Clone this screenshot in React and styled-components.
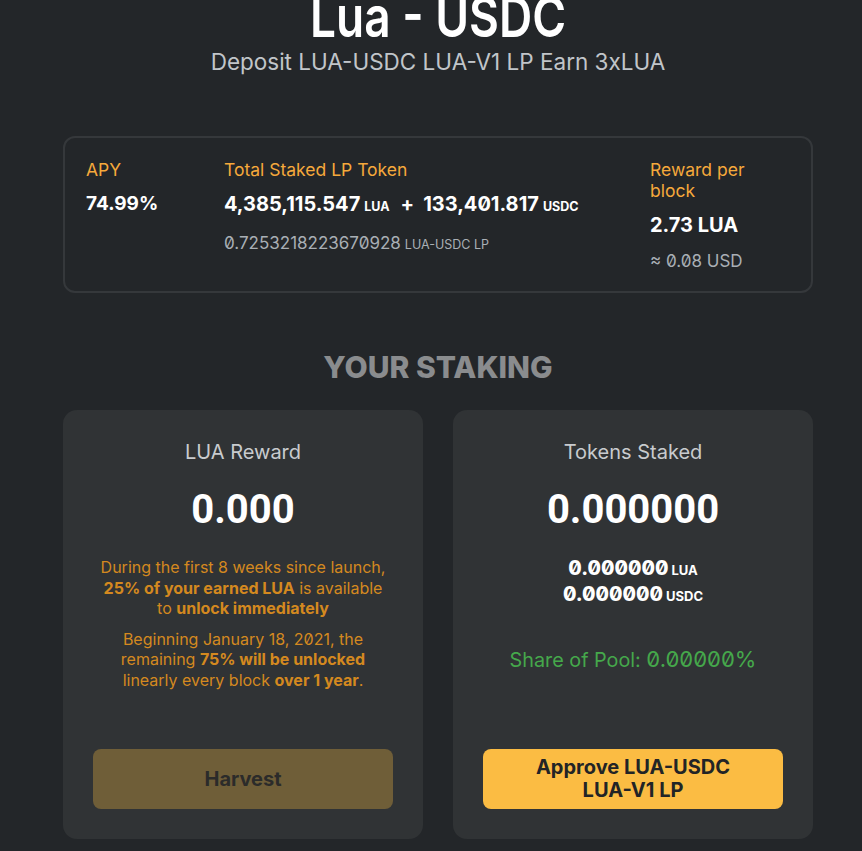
import React from 'react'
import { styled, createGlobalStyle } from 'styled-components'

const Global = createGlobalStyle`
  html, body {
    margin: 0;
    padding: 0;
    background: #232629;
  }
  body {
    font-family: Inter, "Noto Sans", sans-serif;
    font-feature-settings: "zero" 1;
    color: #fff;
  }
`

const Page = styled.div`
  width: 750px;
  margin-left: 63px;
  padding-bottom: 40px;
`

const Header = styled.div`
  display: flex;
  flex-direction: column;
  align-items: center;
`

const Title = styled.h1`
  margin: -3px 0 0;
  font-size: 46px;
  line-height: 46px;
  font-weight: 600;
  color: #fff;
  transform: scaleY(1.22);
  transform-origin: 50% 86%;
`

const Subtitle = styled.div`
  margin-top: 5px;
  font-size: 22.5px;
  line-height: 28px;
  color: #c1c5c9;
`

const Stats = styled.div`
  margin-top: 60px;
  border: 2px solid #35383b;
  border-radius: 12px;
  padding: 21px 40px 19px 21px;
  display: grid;
  grid-template-columns: 138px 1fr 121px;
`

const StatCol = styled.div`
  display: flex;
  flex-direction: column;
`

const Label = styled.div`
  font-size: 17.5px;
  line-height: 21px;
  color: #f6a93b;
`

const Value = styled.div`
  margin-top: 12px;
  font-size: ${p => p.$size || 20}px;
  line-height: 24px;
  font-weight: 700;
  color: #fff;
  white-space: nowrap;
`

const Unit = styled.span`
  font-size: 12.5px;
  font-weight: 700;
  margin-left: 4px;
`

const Plus = styled.span`
  margin: 0 9px 0 11px;
`

const Sub = styled.div`
  margin-top: 13px;
  font-size: 17px;
  line-height: 22px;
  color: #a9afb5;
  white-space: nowrap;
`

const SubUnit = styled.span`
  font-size: 12.5px;
  margin-left: 4px;
`

const Heading = styled.h2`
  margin: 56px 0 25px;
  text-align: center;
  font-size: 30px;
  line-height: 36px;
  font-weight: 800;
  color: #8a8c8e;
`

const Cards = styled.div`
  display: grid;
  grid-template-columns: 360px 360px;
  gap: 30px;
`

const Card = styled.div`
  background: #303335;
  border-radius: 14px;
  padding: 30px;
  display: flex;
  flex-direction: column;
  align-items: center;
  text-align: center;
  min-height: 369px;
`

const CardTitle = styled.div`
  font-size: 20px;
  line-height: 24px;
  color: #c8cbce;
`

const BigNumber = styled.div`
  margin-top: 23px;
  font-family: Roboto, Inter, sans-serif;
  font-size: 40px;
  line-height: 46px;
  font-weight: 700;
  color: #fff;
`

const Note = styled.p`
  margin: ${p => p.$top}px 0 0;
  max-width: 290px;
  font-size: 16px;
  line-height: 20.5px;
  color: #d4891f;
  b {
    font-weight: 700;
  }
`

const Amounts = styled.div`
  margin-top: 23px;
  display: flex;
  flex-direction: column;
  align-items: center;
`

const Amount = styled.div`
  font-size: 19.5px;
  line-height: 24px;
  font-weight: 800;
  color: #fff;
`

const AmountUnit = styled.span`
  font-size: 13px;
  font-weight: 700;
  margin-left: 3px;
`

const Share = styled.div`
  margin-top: 38px;
  font-size: 19.8px;
  line-height: 26px;
  color: #45a84b;
`

const ShareValue = styled.span`
  font-size: 22px;
`

const Button = styled.button`
  margin-top: auto;
  width: 300px;
  height: 60px;
  border: none;
  border-radius: 8px;
  font-family: Inter, "Noto Sans", sans-serif;
  font-size: 20px;
  line-height: 23px;
  font-weight: 700;
  background: ${p => (p.$disabled ? '#6f5e38' : '#fbbc43')};
  color: ${p => (p.$disabled ? '#2b2b2a' : '#222426')};
  cursor: pointer;
`

export default function App() {
  return (
    <>
      <Global />
      <Page>
        <Header>
          <Title>Lua - USDC</Title>
          <Subtitle>Deposit LUA-USDC LUA-V1 LP Earn 3xLUA</Subtitle>
        </Header>

        <Stats>
          <StatCol>
            <Label>APY</Label>
            <Value $size={19}>74.99%</Value>
          </StatCol>
          <StatCol>
            <Label>Total Staked LP Token</Label>
            <Value>
              4,385,115.547<Unit>LUA</Unit>
              <Plus>+</Plus>
              133,401.817<Unit>USDC</Unit>
            </Value>
            <Sub>
              0.7253218223670928<SubUnit>LUA-USDC LP</SubUnit>
            </Sub>
          </StatCol>
          <StatCol>
            <Label>Reward per block</Label>
            <Value>2.73 LUA</Value>
            <Sub>≈ 0.08 USD</Sub>
          </StatCol>
        </Stats>

        <Heading>YOUR STAKING</Heading>

        <Cards>
          <Card>
            <CardTitle>LUA Reward</CardTitle>
            <BigNumber>0.000</BigNumber>
            <Note $top={24}>
              During the first 8 weeks since launch, <b>25% of your earned LUA</b> is available
              to <b>unlock immediately</b>
            </Note>
            <Note $top={10}>
              Beginning January 18, 2021, the remaining <b>75% will be unlocked</b> linearly
              every block <b>over 1 year</b>.
            </Note>
            <Button $disabled>Harvest</Button>
          </Card>

          <Card>
            <CardTitle>Tokens Staked</CardTitle>
            <BigNumber>0.000000</BigNumber>
            <Amounts>
              <Amount>
                0.000000<AmountUnit>LUA</AmountUnit>
              </Amount>
              <Amount>
                0.000000<AmountUnit>USDC</AmountUnit>
              </Amount>
            </Amounts>
            <Share>
              Share of Pool: <ShareValue>0.00000%</ShareValue>
            </Share>
            <Button>
              Approve LUA-USDC
              <br />
              LUA-V1 LP
            </Button>
          </Card>
        </Cards>
      </Page>
    </>
  )
}
